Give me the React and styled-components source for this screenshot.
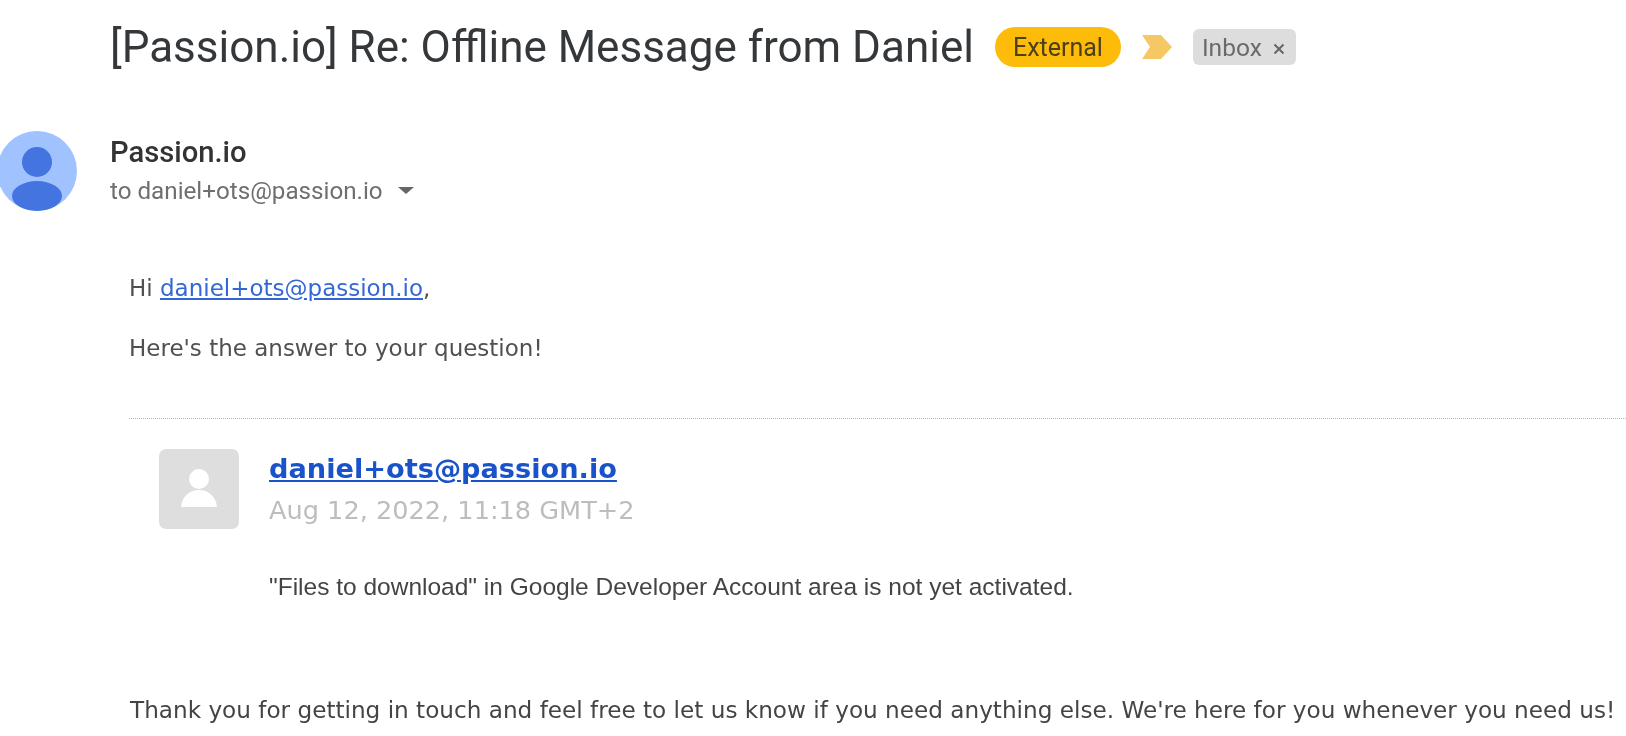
import React from "react";
import styled, { createGlobalStyle } from "styled-components";

const GlobalStyle = createGlobalStyle`
  html, body {
    margin: 0;
    padding: 0;
    height: 736px;
    overflow: hidden;
    background: #fff;
  }
`;

const Page = styled.div`
  width: 1626px;
  height: 736px;
  overflow: hidden;
  background: #fff;
  font-family: "DejaVu Sans", Verdana, sans-serif;
  filter: blur(0.5px);
`;

const SubjectRow = styled.div`
  display: flex;
  align-items: center;
  height: 40px;
  padding: 27px 0 0 110px;
`;

const Subject = styled.h1`
  margin: 0;
  font-family: Roboto, Arial, sans-serif;
  font-size: 44px;
  font-weight: 400;
  line-height: 40px;
  color: #35383b;
  white-space: nowrap;
`;

const ExternalBadge = styled.span`
  display: flex;
  align-items: center;
  justify-content: center;
  width: 126px;
  height: 40px;
  margin-left: 21px;
  border-radius: 20px;
  background: #fdbb0a;
  color: #4d4017;
  font-family: Roboto, Arial, sans-serif;
  font-size: 25px;
`;

const Marker = styled.svg`
  width: 32px;
  height: 26px;
  margin-left: 20px;
`;

const InboxChip = styled.span`
  display: flex;
  align-items: center;
  gap: 11px;
  height: 36px;
  margin-left: 20px;
  padding: 0 11px 0 9px;
  border-radius: 6px;
  background: #dddddd;
  color: #6b6b6b;
  font-family: Roboto, Arial, sans-serif;
  font-size: 24.5px;
`;

const Close = styled.svg`
  width: 12px;
  height: 12px;
  margin-top: 3px;
`;

const SenderRow = styled.div`
  display: flex;
  align-items: center;
  gap: 33px;
  margin: 64px 0 0 -3px;
`;

const SenderAvatar = styled.svg`
  width: 80px;
  height: 80px;
  flex: none;
`;

const SenderMeta = styled.div`
  display: flex;
  flex-direction: column;
  gap: 11px;
  margin-top: -2px;
`;

const SenderName = styled.div`
  font-family: Roboto, Arial, sans-serif;
  font-size: 29.2px;
  font-weight: 500;
  line-height: 30px;
  color: #333;
`;

const ToLine = styled.div`
  display: flex;
  align-items: center;
  gap: 15px;
  font-family: Roboto, Arial, sans-serif;
  font-size: 24.2px;
  line-height: 26px;
  color: #6f6f6f;
`;

const Caret = styled.span`
  width: 0;
  height: 0;
  border-left: 8px solid transparent;
  border-right: 8px solid transparent;
  border-top: 7px solid #666;
`;

const Body = styled.div`
  padding: 64px 0 0 129px;
  color: #505050;
  font-size: 23px;
  line-height: 26px;
`;

const Para = styled.p`
  margin: 0 0 34px;
  white-space: nowrap;
`;

const BodyLink = styled.a`
  color: #3367d6;
  text-decoration: underline;
`;

const Divider = styled.div`
  border-top: 1px dotted #b5b5b5;
  margin-top: 57px;
`;

const Reply = styled.div`
  display: flex;
  gap: 30px;
  margin: 30px 0 0 30px;
`;

const ReplyAvatar = styled.div`
  display: flex;
  align-items: center;
  justify-content: center;
  width: 80px;
  height: 80px;
  flex: none;
  border-radius: 7px;
  background: #dedede;
`;

const ReplyMeta = styled.div`
  display: flex;
  flex-direction: column;
  gap: 8px;
  padding-top: 2px;
`;

const ReplyLink = styled.a`
  color: #1a53c9;
  font-size: 27.2px;
  font-weight: 700;
  line-height: 36px;
  text-decoration: underline;
`;

const ReplyDate = styled.div`
  color: #bdbdbd;
  font-size: 25.6px;
  line-height: 30px;
`;

const ReplyText = styled.p`
  margin: 43px 0 0 140px;
  font-family: "Liberation Sans", Arial, sans-serif;
  font-size: 24.5px;
  line-height: 30px;
  color: #444;
  white-space: nowrap;
`;

const Closing = styled.p`
  margin: 95px 0 0 1px;
  font-size: 23.15px;
  line-height: 26px;
  color: #444;
  white-space: nowrap;
`;

export default function App() {
  return (
    <Page>
      <GlobalStyle />
      <SubjectRow>
        <Subject>[Passion.io] Re: Offline Message from Daniel</Subject>
        <ExternalBadge>External</ExternalBadge>
        <Marker viewBox="0 0 32 26">
          <path d="M1 1H20L31 13L20 25H1L9 13Z" fill="#f6c864" />
        </Marker>
        <InboxChip>
          Inbox
          <Close viewBox="0 0 12 12">
            <path d="M1.5 1.5L10.5 10.5M10.5 1.5L1.5 10.5" stroke="#666" strokeWidth="2" />
          </Close>
        </InboxChip>
      </SubjectRow>

      <SenderRow>
        <SenderAvatar viewBox="0 0 80 80">
          <circle cx="40" cy="40" r="40" fill="#a0c3ff" />
          <ellipse cx="40" cy="31" rx="15" ry="15" fill="#4374e0" />
          <ellipse cx="40" cy="65" rx="25" ry="15" fill="#4374e0" />
        </SenderAvatar>
        <SenderMeta>
          <SenderName>Passion.io</SenderName>
          <ToLine>
            to daniel+ots@passion.io
            <Caret />
          </ToLine>
        </SenderMeta>
      </SenderRow>

      <Body>
        <Para>
          Hi <BodyLink href="#">daniel+ots@passion.io</BodyLink>,
        </Para>
        <Para>Here's the answer to your question!</Para>
        <Divider />
        <Reply>
          <ReplyAvatar>
            <svg width="36" height="40" viewBox="0 0 36 40">
              <circle cx="18" cy="10" r="10" fill="#fff" />
              <path d="M0 38C1 27 9 21 18 21C27 21 35 27 36 38Z" fill="#fff" />
            </svg>
          </ReplyAvatar>
          <ReplyMeta>
            <ReplyLink href="#">daniel+ots@passion.io</ReplyLink>
            <ReplyDate>Aug 12, 2022, 11:18 GMT+2</ReplyDate>
          </ReplyMeta>
        </Reply>
        <ReplyText>"Files to download" in Google Developer Account area is not yet activated.</ReplyText>
        <Closing>Thank you for getting in touch and feel free to let us know if you need anything else. We're here for you whenever you need us!</Closing>
      </Body>
    </Page>
  );
}
